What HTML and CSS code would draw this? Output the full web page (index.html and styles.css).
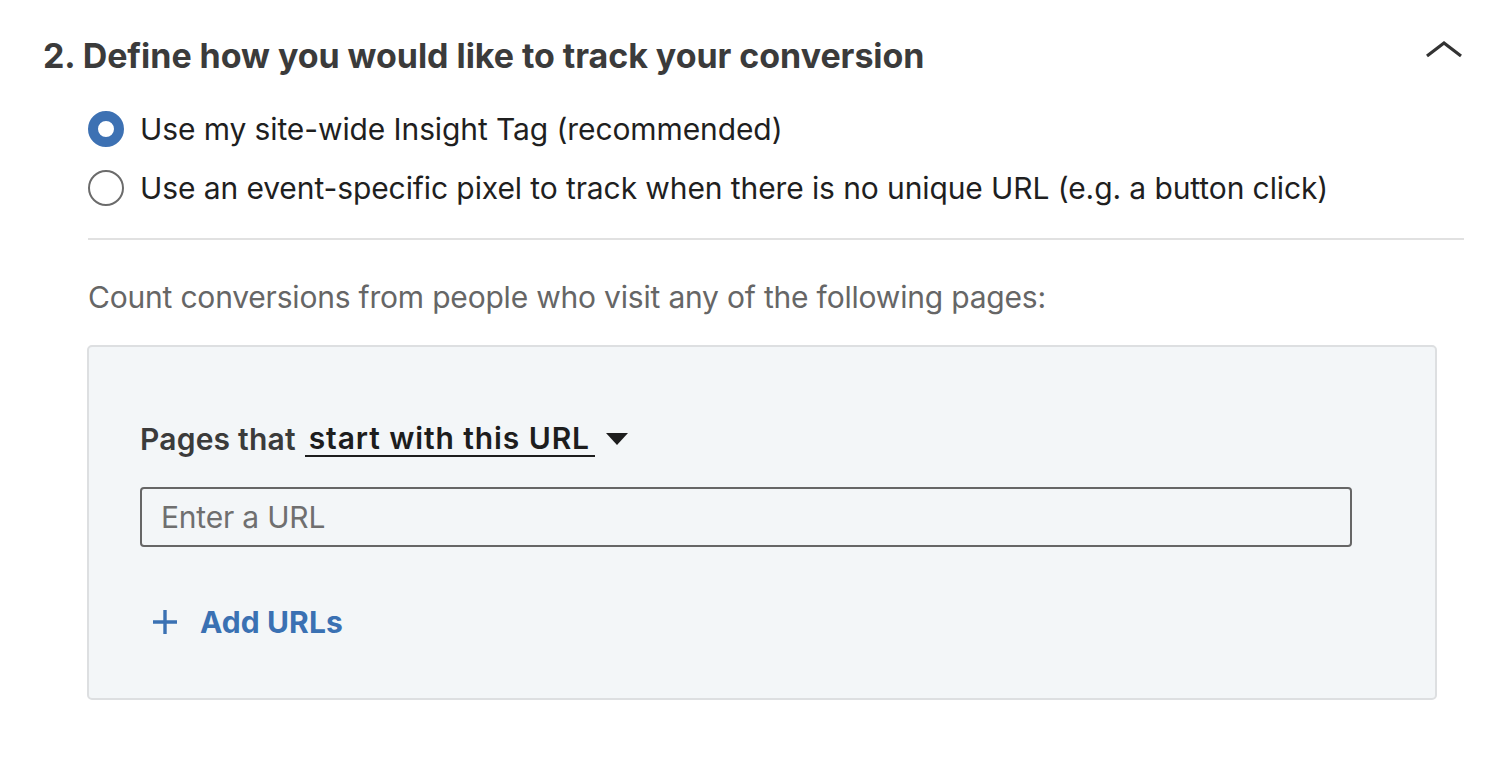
FILE: index.html
```html
<!DOCTYPE html>
<html>
<head>
<meta charset="utf-8">
<link rel="stylesheet" href="styles.css">
</head>
<body>
<section class="panel">
  <header class="panel-head">
    <h2 class="title">2. Define how you would like to track your conversion</h2>
    <svg class="chevron" width="40" height="20" viewBox="0 0 40 20"><path d="M3 16 L20 3 L37 16" fill="none" stroke="#333" stroke-width="3.2"/></svg>
  </header>
  <div class="body">
    <div class="options">
      <label class="option"><span class="radio checked"></span><span>Use my site-wide Insight Tag (recommended)</span></label>
      <label class="option"><span class="radio"></span><span>Use an event-specific pixel to track when there is no unique URL (e.g. a button click)</span></label>
    </div>
    <hr class="divider">
    <p class="hint">Count conversions from people who visit any of the following pages:</p>
    <div class="box">
      <div class="rule-row">
        <span class="rule-label">Pages that</span>
        <span class="select">start with this URL</span>
        <svg class="caret" width="24" height="14" viewBox="0 0 24 14"><path d="M1 1 H23 L12 13 Z" fill="#1d1d1d"/></svg>
      </div>
      <div class="input">Enter a URL</div>
      <div class="add">
        <svg class="plus" width="26" height="26" viewBox="0 0 26 26"><path d="M13 1 V25 M1 13 H25" stroke="#3a71b3" stroke-width="3.4"/></svg>
        <span>Add URLs</span>
      </div>
    </div>
  </div>
</section>
</body>
</html>
```

FILE: styles.css
```css
* { box-sizing: border-box; }
body {
  margin: 0;
  background: #fff;
  font-family: Inter, "Liberation Sans", Arial, sans-serif;
  color: #222;
}
.panel {
  width: 1500px;
  padding: 30px 36px 0 43px;
}
.panel-head {
  display: flex;
  justify-content: space-between;
  align-items: flex-start;
}
.title {
  margin: 0;
  font-size: 34px;
  font-weight: 700;
  line-height: 52px;
  color: #3b3b3b;
  letter-spacing: -0.05px;
}
.chevron {
  margin-top: 10px;
}
.body {
  padding-left: 45px;
}
.options {
  margin-top: 29px;
  display: flex;
  flex-direction: column;
  gap: 23px;
}
.option {
  display: flex;
  align-items: center;
  gap: 16px;
  font-size: 30px;
  line-height: 36px;
  color: #1f1f1f;
  letter-spacing: -0.1px;
}
.radio {
  width: 36px;
  height: 36px;
  border-radius: 50%;
  border: 2px solid #6b6b6b;
  background: #fff;
  flex: none;
}
.radio.checked {
  border: 10px solid #3d71b3;
}
.divider {
  margin: 32px 0 0 0;
  border: 0;
  border-top: 2px solid #e1e1e1;
  width: 1376px;
}
.hint {
  margin: 39px 0 0 0;
  font-size: 30px;
  line-height: 36px;
  color: #666;
  letter-spacing: -0.2px;
}
.box {
  margin-top: 30px;
  margin-left: -1px;
  width: 1350px;
  height: 355px;
  background: #f3f6f8;
  border: 2px solid #dddfe1;
  border-radius: 5px;
  padding: 74px 0 0 51px;
}
.rule-row {
  display: flex;
  align-items: center;
  font-size: 30px;
  line-height: 36px;
  letter-spacing: 0.2px;
}
.rule-label {
  font-weight: 600;
  color: #3b3b3b;
}
.select {
  margin-left: 9px;
  padding: 0 5px 0 4px;
  font-weight: 600;
  color: #1d1d1d;
  border-bottom: 2px solid #1d1d1d;
  line-height: 34px;
  letter-spacing: 0.9px;
}
.caret {
  margin-left: 10px;
}
.input {
  margin-top: 30px;
  width: 1212px;
  height: 60px;
  border: 2px solid #666;
  border-radius: 4px;
  padding: 0 19px;
  display: flex;
  align-items: center;
  font-size: 30px;
  color: #6f6f6f;
  letter-spacing: -0.2px;
}
.add {
  margin-top: 57px;
  margin-left: 12px;
  display: flex;
  align-items: center;
  gap: 22px;
  font-size: 30px;
  font-weight: 700;
  color: #3a71b3;
  letter-spacing: 0.1px;
}
```
